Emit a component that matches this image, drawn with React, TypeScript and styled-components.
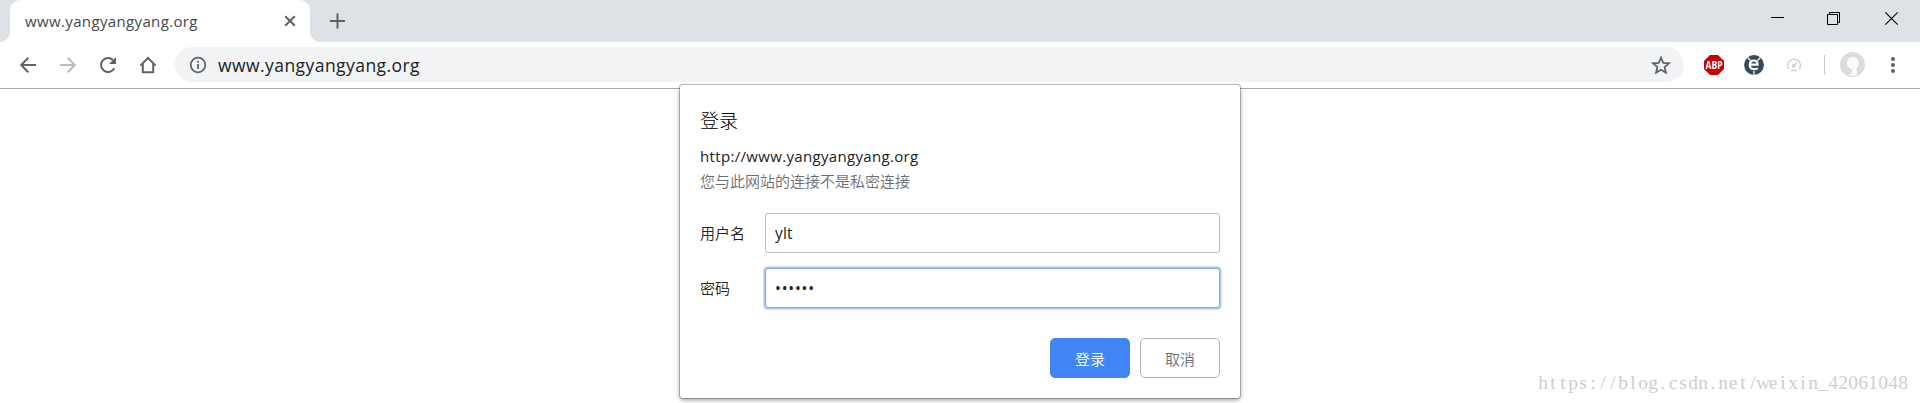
import React from 'react';
import styled, { createGlobalStyle, css } from 'styled-components';

const GlobalStyle = createGlobalStyle`
  * { box-sizing: border-box; }
  html, body { margin: 0; background: #fff; overflow: hidden; }
  body { font-family: "Open Sans", "Noto Sans CJK SC", sans-serif; color: #202124; }
  button, input { font: inherit; margin: 0; }
`;

const Window = styled.div`
  position: relative;
  width: 1920px;
  height: 403px;
  overflow: hidden;
`;

const TabStrip = styled.header`
  display: flex;
  height: 42px;
  padding-left: 10px;
  background: #dee1e6;
`;

const Tab = styled.div`
  position: relative;
  display: flex;
  align-items: center;
  justify-content: space-between;
  width: 300px;
  padding: 0 14px 0 15px;
  background: #fff;
  border-radius: 10px 10px 0 0;
  &::before, &::after {
    content: '';
    position: absolute;
    bottom: 0;
    width: 10px;
    height: 10px;
  }
  &::before { left: -10px; background: radial-gradient(circle at 0 0, transparent 9.5px, #fff 10.5px); }
  &::after { right: -10px; background: radial-gradient(circle at 100% 0, transparent 9.5px, #fff 10.5px); }
`;

const TabTitle = styled.span`
  font-size: 15px;
  letter-spacing: 0.36px;
  line-height: 20px;
  color: #45494d;
  white-space: nowrap;
`;

const NewTab = styled.div`
  display: flex;
  padding: 13px 0 0 20px;
`;

const WindowControls = styled.div`
  display: flex;
  align-items: center;
  gap: 43px;
  height: 37px;
  margin-left: auto;
  padding-right: 22px;
  > :last-child { margin-left: 2px; }
`;

const Toolbar = styled.nav`
  display: flex;
  align-items: center;
  height: 47px;
  padding: 0 14px 1px 18px;
  border-bottom: 1px solid #a9a9a9;
`;

const NavIcons = styled.div`
  display: flex;
  flex: none;
  gap: 20px;
  width: 157px;
`;

const Omnibox = styled.div`
  display: flex;
  flex: none;
  align-items: center;
  width: 1509px;
  height: 35px;
  padding: 0 13px;
  border-radius: 18px;
  background: #f1f3f4;
`;

const Address = styled.span`
  flex: 1;
  margin-left: 10px;
  font-size: 17.5px;
  letter-spacing: 0.44px;
  line-height: 24px;
`;

const Extensions = styled.div`
  display: flex;
  flex: none;
  align-items: center;
  margin-left: 20px;
  gap: 20px;
`;

const Divider = styled.i`
  width: 1px;
  height: 20px;
  background: #c9cbce;
`;

const ProfileGroup = styled.div`
  display: flex;
  flex: none;
  align-items: center;
  gap: 15px;
  margin-left: 15px;
`;

const Icon = styled.svg`
  display: block;
  flex: none;
  overflow: visible;
`;

const Dialog = styled.form`
  position: absolute;
  left: 680px;
  top: 85px;
  width: 560px;
  height: 313px;
  padding: 22px 20px 0;
  background: #fff;
  border-radius: 3px;
  box-shadow: 0 0 0 1px rgba(0, 0, 0, 0.22), 0 2px 5px rgba(0, 0, 0, 0.4);
`;

const Title = styled.h1`
  margin: 0 0 9px;
  font-size: 19px;
  font-weight: 300;
  line-height: 28px;
  color: #000;
`;

const Origin = styled.div`
  font-size: 15px;
  letter-spacing: 0.33px;
  line-height: 24px;
`;

const Warning = styled.div`
  margin: 1px 0 19px;
  font-size: 15px;
  font-weight: 350;
  line-height: 25px;
  color: #6a6e73;
`;

const Field = styled.label`
  display: flex;
  align-items: center;
  height: 40px;
  margin-bottom: 15px;
`;

const FieldName = styled.span`
  width: 65px;
  padding-bottom: 1px;
  font-size: 15px;
  font-weight: 350;
  color: #202124;
`;

const Input = styled.input<{ $active?: boolean }>`
  width: 455px;
  height: 40px;
  padding: 0 9px;
  border: 1px solid #bdbdbd;
  border-radius: 3px;
  outline: none;
  background: #fff;
  color: #202124;
  font-size: 15.5px;
  letter-spacing: 0.2px;
  ${p => p.$active && css`
    border-color: #8caae0;
    box-shadow: 0 0 0 1.5px #a9c5f7;
    letter-spacing: 0.8px;
  `}
`;

const Actions = styled.div`
  display: flex;
  justify-content: flex-end;
  gap: 10px;
  margin-top: 30px;
`;

const Button = styled.button<{ $primary?: boolean }>`
  width: 80px;
  height: 40px;
  padding: 0;
  border: 1px solid ${p => (p.$primary ? '#4285f4' : '#b0b0b0')};
  border-radius: 5px;
  background: ${p => (p.$primary ? '#4285f4' : '#fff')};
  color: ${p => (p.$primary ? '#fff' : '#6a6e73')};
  font-size: 15px;
  font-weight: 350;
`;

const Watermark = styled.svg`
  position: absolute;
  right: 12px;
  bottom: 6px;
  font-family: "Liberation Serif", serif;
  font-size: 19.5px;
  fill: #cfcfc9;
`;

const watermark = 'https://blog.csdn.net/weixin_42061048';
const cells = Array.from(watermark, (_, i) => i * 10 + 5).join(' ');

const Stroke = ({ d, color = '#5f6368', w = 2 }: { d: string; color?: string; w?: number }) => (
  <Icon width="20" height="20" fill="none" stroke={color} strokeWidth={w}><path d={d} /></Icon>
);

export default function App() {
  return (
    <Window>
      <GlobalStyle />
      <TabStrip>
        <Tab>
          <TabTitle>www.yangyangyang.org</TabTitle>
          <Icon width="12" height="12" stroke="#5f6368" strokeWidth="2"><path d="M1.2 1.2l9.6 9.6M10.8 1.2l-9.6 9.6" /></Icon>
        </Tab>
        <NewTab>
          <Icon width="15" height="16" stroke="#5f6368" strokeWidth="2"><path d="M0 8h15M7.5 .5v15" /></Icon>
        </NewTab>
        <WindowControls>
          <Icon width="13" height="13" stroke="#000" strokeWidth="1"><path d="M0 5.5h13" /></Icon>
          <Icon width="13" height="13" fill="none" stroke="#000" strokeWidth="1"><path d="M.5 2.5h10v10H.5zM2.5 2.5v-2h10v10h-2" /></Icon>
          <Icon width="13" height="13" stroke="#000" strokeWidth="1.1"><path d="M.3 .3l12.4 12.4M12.7 .3L.3 12.7" /></Icon>
        </WindowControls>
      </TabStrip>
      <Toolbar>
        <NavIcons>
          <Stroke d="M18 10H3.5M10.3 2.8L3.2 10l7.1 7.2" />
          <Stroke color="#babcbe" d="M2 10h14.5M9.7 2.8l7.1 7.2-7.1 7.2" />
          <Icon width="20" height="20">
            <path d="M16.3 13.2A7 7 0 1 1 15 5" fill="none" stroke="#5f6368" strokeWidth="2" />
            <path d="M18 2v7h-7z" fill="#5f6368" />
          </Icon>
          <Stroke d="M2.4 10.6L10 3l7.6 7.6M4.8 9v8.2h10.4V9" />
        </NavIcons>
        <Omnibox>
          <Icon width="20" height="20" fill="none" stroke="#5f6368" strokeWidth="1.8">
            <circle cx="10" cy="10" r="7.3" /><path d="M10 9v5M10 5.8v2" />
          </Icon>
          <Address>www.yangyangyang.org</Address>
          <Icon width="20" height="20" fill="none" stroke="#5f6368" strokeWidth="1.8">
            <path d="M10 2.6l2.2 5.2 5.8.5-4.4 3.8 1.3 5.6-4.9-3-4.9 3 1.3-5.6L2 8.3l5.8-.5z" />
          </Icon>
        </Omnibox>
        <Extensions>
          <Icon width="20" height="20">
            <path d="M6 0h8l6 6v8l-6 6H6l-6-6V6z" fill="#c70000" />
            <text x="1.5" y="14" fontFamily="Open Sans" fontSize="11" fontWeight="700" fill="#fff" textLength="17" lengthAdjust="spacingAndGlyphs">ABP</text>
          </Icon>
          <Icon width="20" height="20">
            <circle cx="10" cy="10" r="9.9" fill="#34495a" />
            <path d="M3.5 2.5l3 3M16.5 2.5l-3 3M10 16v4" stroke="#fff" strokeWidth="1.2" />
            <path d="M6 9.6h7.6c0-2.700-1.300-4.100-3.700-4.100S5.800 7.200 5.800 9.800s1.700 4.400 4.200 4.400c1.600 0 2.800-.4 3.800-1.100" fill="none" stroke="#fff" strokeWidth="2.200" />
          </Icon>
          <Icon width="20" height="20" fill="none" stroke="#cfcfcf" strokeWidth="1.5">
            <path d="M4.700 14.200A6.400 6.400 0 1 1 15.300 14.200M9.500 11.500L13 7.500M7 15.500h6" />
            <circle cx="9.5" cy="11" r="1" />
          </Icon>
          <Divider />
        </Extensions>
        <ProfileGroup>
          <Icon width="25" height="25">
            <circle cx="12.5" cy="12.5" r="12.5" fill="#dcdcdc" />
            <path d="M12.500 5c4.300 0 6.300 2.600 6.300 6.500 0 2.500-1 4-2.300 5l.5 6.500c-3 1.500-6.200 1.200-9-.5l3-1.500-.3-4C8.500 16 7 14 7 11.500 7 7.600 8.500 5 12.500 5z" fill="#f9fafb" />
            <path d="M8 22l3-1 .3-3.500" fill="none" stroke="#c6d6df" strokeWidth="1" />
          </Icon>
          <Icon width="26" height="20" fill="#5f6368"><circle cx="13" cy="4" r="2" /><circle cx="13" cy="10" r="2" /><circle cx="13" cy="16" r="2" /></Icon>
        </ProfileGroup>
      </Toolbar>
      <Dialog onSubmit={e => e.preventDefault()}>
        <Title>登录</Title>
        <Origin>http://www.yangyangyang.org</Origin>
        <Warning>您与此网站的连接不是私密连接</Warning>
        <Field><FieldName>用户名</FieldName><Input defaultValue="ylt" /></Field>
        <Field><FieldName>密码</FieldName><Input $active type="password" defaultValue="123456" /></Field>
        <Actions>
          <Button $primary>登录</Button>
          <Button type="button">取消</Button>
        </Actions>
      </Dialog>
      <Watermark width="370" height="30">
        <text x={cells} y="22" textAnchor="middle">{watermark}</text>
      </Watermark>
    </Window>
  );
}
